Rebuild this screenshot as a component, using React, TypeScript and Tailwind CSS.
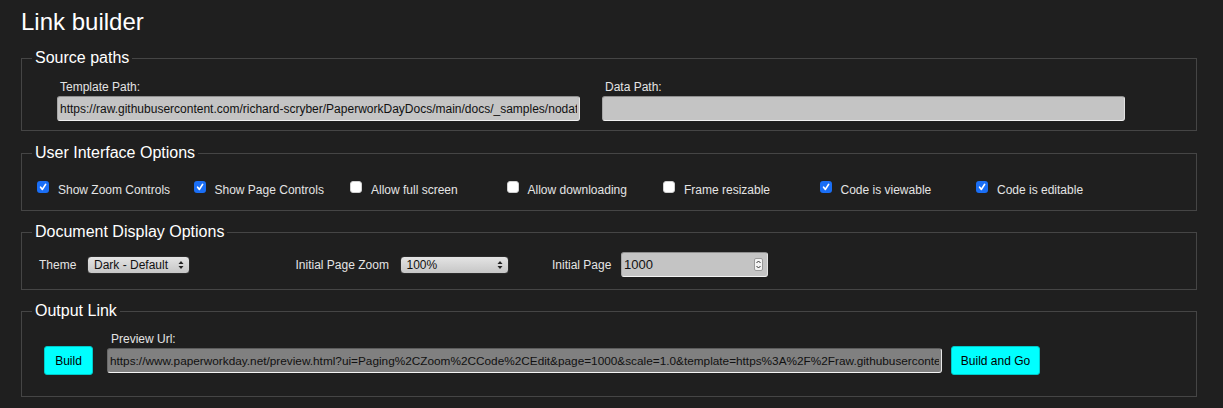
import React from 'react';

const templateUrl =
    'https://raw.githubusercontent.com/richard-scryber/PaperworkDayDocs/main/docs/_samples/nodata/helloworld.html';
const previewUrl =
    'https://www.paperworkday.net/preview.html?ui=Paging%2CZoom%2CCode%2CEdit&page=1000&scale=1.0&template=https%3A%2F%2Fraw.githubusercontent.com%2Frichard-scryber%2FPaperworkDayDocs%2Fmain%2Fdocs%2F_samples%2Fnodata%2Fhelloworld.html';

const uiOptions = [
    { label: 'Show Zoom Controls', checked: true },
    { label: 'Show Page Controls', checked: true },
    { label: 'Allow full screen', checked: false },
    { label: 'Allow downloading', checked: false },
    { label: 'Frame resizable', checked: false },
    { label: 'Code is viewable', checked: true },
    { label: 'Code is editable', checked: true },
];

function Section({ title, className, children }: { title: string; className?: string; children: React.ReactNode }) {
    return (
        <fieldset className={`border border-[#454545] ${className ?? ''}`}>
            <legend className="ml-[10px] px-[3px] text-[16px] leading-[18px] text-white">{title}</legend>
            {children}
        </fieldset>
    );
}

function CheckOption({ label, checked }: { label: string; checked: boolean }) {
    return (
        <div className="w-[156.5px] shrink-0 flex items-start">
            {checked ? (
                <span className="w-[12px] h-[12px] rounded-[3px] bg-[#1a6ef5] flex items-center justify-center">
                    <svg width="10" height="10" viewBox="0 0 10 10">
                        <path d="M2.6 5.2 L4.4 7.4 L7.6 2.4" fill="none" stroke="white" strokeWidth="1.7"
                              strokeLinecap="round" strokeLinejoin="round" />
                    </svg>
                </span>
            ) : (
                <span className="w-[12px] h-[12px] rounded-[3px] bg-white border border-[#cfcfcf]" />
            )}
            <span className="ml-[9px] mt-[2px] text-[12px] leading-[14px] text-[#e4e4e4] whitespace-nowrap">
                {label}
            </span>
        </div>
    );
}

function SelectBox({ value, width }: { value: string; width: string }) {
    return (
        <div className={`${width} h-[18px] rounded-[4px] border border-[#2b2b2b] bg-gradient-to-b from-[#e4e4e4] to-[#c6c6c6]
                         flex items-center justify-between pl-[6px] pr-[5px] text-[12px] text-[#111]`}>
            <span>{value}</span>
            <svg width="6" height="10" viewBox="0 0 6 10">
                <path d="M0.5 4 L3 1 L5.5 4 Z" fill="#222" />
                <path d="M0.5 6 L3 9 L5.5 6 Z" fill="#222" />
            </svg>
        </div>
    );
}

export default function App() {
    return (
        <div className="min-h-screen bg-[#1f1f1f] pl-[21px] pr-[26px] pt-[8px] pb-[12px] font-['Liberation_Sans',Arial,sans-serif]">
            <h1 className="text-[24px] leading-[28px] text-white">Link builder</h1>

            {/* Source paths */}
            <Section title="Source paths" className="mt-[13px]">
                <div className="flex gap-[22px] pl-[35px] pt-[13px] pb-[9px]">
                    <div className="w-[523px]">
                        <div className="pl-[3px] text-[12px] leading-[14px] text-[#e4e4e4]">Template Path:</div>
                        <input
                            readOnly
                            value={templateUrl}
                            className="mt-[2px] w-[523px] h-[25px] rounded-[3px] bg-[#c4c4c4] border border-t-[#8e8e8e] border-l-[#a6a6a6]
                                       border-r-[#e2e2e2] border-b-[#f2f2f2] px-[2px] text-[12px] text-[#111] outline-none"
                        />
                    </div>
                    <div className="w-[523px]">
                        <div className="pl-[3px] text-[12px] leading-[14px] text-[#e4e4e4]">Data Path:</div>
                        <input
                            readOnly
                            value=""
                            className="mt-[2px] w-[523px] h-[25px] rounded-[3px] bg-[#c4c4c4] border border-t-[#8e8e8e] border-l-[#a6a6a6]
                                       border-r-[#e2e2e2] border-b-[#f2f2f2] px-[2px] text-[12px] text-[#111] outline-none"
                        />
                    </div>
                </div>
            </Section>

            {/* User Interface Options */}
            <Section title="User Interface Options" className="mt-[13px]">
                <div className="flex pl-[15px] pt-[19px] pb-[13px]">
                    {uiOptions.map(o => (
                        <CheckOption key={o.label} label={o.label} checked={o.checked} />
                    ))}
                </div>
            </Section>

            {/* Document Display Options */}
            <Section title="Document Display Options" className="mt-[12px]">
                <div className="flex items-center pl-[17px] pt-[11px] pb-[12px] h-[48px]">
                    <div className="w-[256.5px] flex items-center">
                        <span className="w-[48px] text-[12px] text-[#e4e4e4]">Theme</span>
                        <SelectBox value="Dark - Default" width="w-[103px]" />
                    </div>
                    <div className="w-[256.5px] flex items-center">
                        <span className="w-[104px] text-[12px] text-[#e4e4e4]">Initial Page Zoom</span>
                        <SelectBox value="100%" width="w-[109px]" />
                    </div>
                    <div className="flex items-center">
                        <span className="w-[69px] text-[12px] text-[#e4e4e4]">Initial Page</span>
                        <div className="w-[147px] h-[25px] rounded-[3px] bg-[#c4c4c4] border border-t-[#8e8e8e] border-l-[#a6a6a6]
                                        border-r-[#e2e2e2] border-b-[#f2f2f2] flex items-center justify-between pl-[2px] pr-[4px]">
                            <span className="text-[13px] text-[#111]">1000</span>
                            <span className="w-[9px] h-[13px] rounded-[2px] bg-[#f4f4f4] border border-[#9a9a9a] flex flex-col items-center justify-center">
                                <svg width="7" height="11" viewBox="0 0 7 11">
                                    <path d="M1.5 4 L3.5 2 L5.5 4" fill="none" stroke="#333" strokeWidth="1" />
                                    <path d="M1.5 7 L3.5 9 L5.5 7" fill="none" stroke="#333" strokeWidth="1" />
                                </svg>
                            </span>
                        </div>
                    </div>
                </div>
            </Section>

            {/* Output Link */}
            <Section title="Output Link" className="mt-[12px]">
                <div className="pl-[22px] pt-[12px] pb-[21px]">
                    <div className="pl-[67px] text-[12px] leading-[14px] text-[#e4e4e4]">Preview Url:</div>
                    <div className="flex items-center">
                        <button className="w-[49px] h-[29px] rounded-[3px] bg-[#00ffff] border border-[#00c9c9] text-[12px] text-black">
                            Build
                        </button>
                        <input
                            readOnly
                            value={previewUrl}
                            className="ml-[14px] w-[835px] h-[25px] rounded-[3px] bg-[#808080] border border-t-[#5c5c5c] border-l-[#6a6a6a]
                                       border-r-[#e8e8e8] border-b-[#f4f4f4] px-[2px] text-[11.8px] text-[#111] outline-none"
                        />
                        <button className="ml-[9px] w-[89px] h-[29px] rounded-[3px] bg-[#00ffff] border border-[#00c9c9] text-[12px] text-black">
                            Build and Go
                        </button>
                    </div>
                </div>
            </Section>
        </div>
    );
}
